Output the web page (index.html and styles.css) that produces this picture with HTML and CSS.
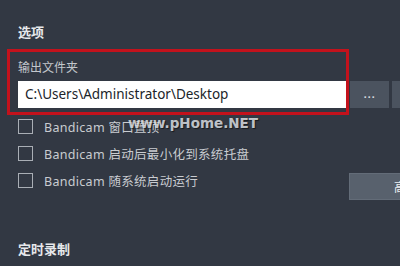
FILE: index.html
```html
<!DOCTYPE html>
<html lang="zh-CN">
<head>
<meta charset="utf-8">
<link rel="stylesheet" href="styles.css">
</head>
<body>
<div class="page">
  <h2 class="section-title">选项</h2>
  <div class="folder">
    <div class="label">输出文件夹</div>
    <div class="path-row">
      <div class="path-input">C:\Users\Administrator\Desktop</div>
      <div class="btn btn-dots">...</div>
      <div class="btn btn-open"></div>
    </div>
    <div class="highlight"></div>
  </div>
  <div class="options">
    <div class="opt-row"><span class="box"></span><span class="opt-text">Bandicam 窗口置顶</span></div>
    <div class="opt-row"><span class="box"></span><span class="opt-text">Bandicam 启动后最小化到系统托盘</span></div>
    <div class="opt-row"><span class="box"></span><span class="opt-text">Bandicam 随系统启动运行</span><span class="btn btn-adv">高级</span></div>
    <div class="watermark">www.pHome.NET</div>
  </div>
  <h2 class="section-title timer">定时录制</h2>
</div>
</body>
</html>
```
FILE: styles.css
```css
html, body {
  margin: 0;
  padding: 0;
  background: #323843;
  width: 400px;
  height: 266px;
  overflow: hidden;
  font-family: "Noto Sans", "Noto Sans CJK SC", sans-serif;
}
.page {
  padding: 23px 0 0 18px;
  width: 420px;
}
.section-title {
  margin: 0;
  font-size: 13px;
  line-height: 18px;
  font-weight: bold;
  color: #e6e8eb;
  font-family: "Noto Sans CJK SC", sans-serif;
}
.folder {
  position: relative;
  margin-top: 18px;
}
.label {
  font-family: "Noto Sans CJK SC", sans-serif;
  font-size: 12px;
  line-height: 16px;
  color: #c3c7cc;
}
.path-row {
  display: flex;
  gap: 3px;
  margin-top: 6px;
  height: 27px;
}
.path-input {
  width: 322px;
  height: 27px;
  background: #ffffff;
  color: #20242a;
  font-size: 13.5px;
  line-height: 27px;
  padding-left: 7px;
}
.btn {
  background: #4b535f;
  color: #d5d8dc;
  height: 27px;
  box-sizing: border-box;
}
.btn-dots {
  width: 39px;
  text-align: center;
  font-family: "DejaVu Sans", sans-serif;
  font-size: 9px;
  line-height: 27px;
  font-weight: bold;
  letter-spacing: 0.5px;
  padding-top: 1px;
}
.btn-open {
  width: 40px;
}
.highlight {
  position: absolute;
  left: -11px;
  top: -10px;
  width: 336px;
  height: 60px;
  border: 3px solid #c3121c;
}
.options {
  position: relative;
  margin-top: 5px;
}
.opt-row {
  display: flex;
  align-items: center;
  height: 27px;
}
.box {
  width: 13px;
  height: 13px;
  border: 1px solid #a9aeb5;
  flex: none;
}
.opt-text {
  margin-left: 11px;
  font-size: 12.5px;
  color: #c9ccd1;
  font-family: "Noto Sans", "Noto Sans CJK SC", sans-serif;
  letter-spacing: 0.3px;
}
.btn-adv {
  margin-left: auto;
  margin-right: 9px;
  margin-top: 12px;
  width: 80px;
  background: #58616d;
  border: 1px solid #636c78;
  color: #eef0f2;
  font-family: "Noto Sans CJK SC", sans-serif;
  font-size: 12px;
  line-height: 25px;
  padding-left: 44px;
  white-space: nowrap;
}
.watermark {
  position: absolute;
  left: 110px;
  top: 2px;
  font-family: "DejaVu Sans", sans-serif;
  font-weight: bold;
  font-size: 13.5px;
  line-height: 17px;
  color: rgba(235, 238, 242, 0.8);
  text-shadow: 1px 1px 1px rgba(0, 0, 0, 0.55);
}
.timer {
  margin-top: 46px;
}
```
